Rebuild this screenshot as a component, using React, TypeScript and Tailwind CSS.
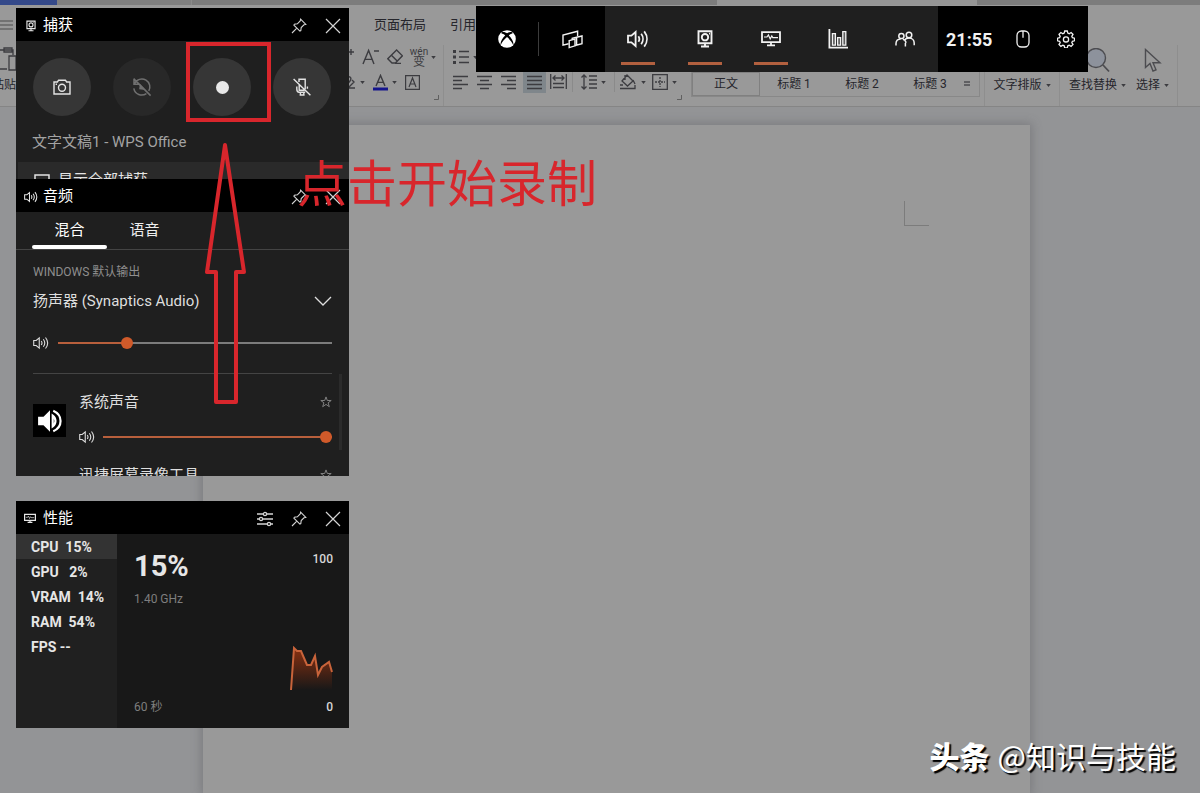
import React from "react";

type Kids = { children?: React.ReactNode };

/* ---------- icons ---------- */

type SvgProps = Kids & { className?: string; box?: string; sw?: number };

function Svg({ children, className = "size-5", box = "0 0 20 20", sw = 1.4 }: SvgProps) {
  return (
    <svg
      viewBox={box}
      className={`shrink-0 ${className}`}
      fill="none"
      stroke="currentColor"
      strokeWidth={sw}
      aria-hidden="true"
    >
      {children}
    </svg>
  );
}

const PinIcon = () => (
  <Svg className="size-4" box="0 0 16 16" sw={1.1}>
    <path d="M9.6 1.2 14.8 6.4 13 6.8 10.2 9.6 9.8 12.6 8.9 13.1 2.9 7.1 3.4 6.2 6.4 5.8 9.2 3z M5.8 10.2 1 15" />
  </Svg>
);

const CloseIcon = () => (
  <Svg className="size-4" box="0 0 16 16" sw={1.2}>
    <path d="M1 1 15 15M15 1 1 15" />
  </Svg>
);

const SlidersIcon = () => (
  <Svg className="size-4" box="0 0 16 16" sw={1.3}>
    <path d="M0 3h6.4M9.6 3H16M0 8h2.4M5.6 8H16M0 13h10.4M13.6 13H16" />
    <circle cx="8" cy="3" r="1.6" />
    <circle cx="4" cy="8" r="1.6" />
    <circle cx="12" cy="13" r="1.6" />
  </Svg>
);

const SpeakerIcon = ({ className = "h-4 w-4", sw = 1.3 }: { className?: string; sw?: number }) => (
  <Svg className={className} box="0 0 22 18" sw={sw}>
    <path d="M1 5.6h3.4L8.6 2v14L4.4 12.4H1z" />
    <path d="M11.4 6.2c1.1 1.6 1.1 4 0 5.6M14.2 3.8c2.3 3 2.3 7.4 0 10.4M17.2 1.4c3.6 4.6 3.6 10.6 0 15.2" />
  </Svg>
);

const CaptureIcon = ({ className = "h-[18px] w-4", sw = 1.9 }: { className?: string; sw?: number }) => (
  <Svg className={className} box="0 0 16 18" sw={sw}>
    <path d="M1.5 1.2h13v12h-13zM8 13v3M4 16.5h8" />
    <circle cx="8" cy="7.2" r="3.2" />
    <path d="M12 3.6h1" />
  </Svg>
);

const MonitorIcon = ({ className = "h-4 w-5", sw = 1.8 }: { className?: string; sw?: number }) => (
  <Svg className={className} box="0 0 20 16" sw={sw}>
    <path d="M1 1.2h18v10H1zM10 11v3M6 14.4h8" />
    <path d="M3 6h3l1.4-2 1.8 4 1.6-3 1 1.6H17" strokeWidth="1.2" />
  </Svg>
);

const XboxIcon = () => (
  <svg viewBox="0 0 20 20" className="size-[18px]" aria-hidden="true">
    <circle cx="10" cy="10" r="9.8" fill="#fff" />
    <path
      d="M4.2 2.6C6 1.6 8.400 2.500 10 3.600 11.600 2.500 14 1.600 15.800 2.600 17 3.600 15.600 4 14.800 4.200 13.600 4.600 12.600 5.400 12 6 15 8.800 18 13.400 17 17 16 14 12.600 10 10 7.900 7.400 10 4 14 3 17 2 13.400 5 8.800 8 6 7.400 5.400 6.400 4.600 5.200 4.200 4.400 4 3 3.600 4.200 2.600z"
      fill="#000"
    />
  </svg>
);

const WidgetsIcon = () => (
  <Svg className="h-[19px] w-[21px]" box="0 0 21 19" sw={1.4}>
    <path d="M15.600 6.200V1.200L1 5v10.200l5.600-1.400" />
    <path d="M7.200 10.600 13 9v6.800L7.200 17.600z" />
    <path d="M10.200 9.700V8.400L20 6v7.600l-7 1.900M14.600 7.300v7.600" />
  </Svg>
);

const BarsIcon = () => (
  <Svg className="size-5" sw={1.3}>
    <path d="M1.4 0v18.6H20" strokeWidth="1.8" />
    <path d="M4.4 4.6h3v11.6h-3zM9.6 8.6h3v7.6h-3zM14.8 2.6h3v13.6h-3z" fill="currentColor" fillOpacity=".3" />
  </Svg>
);

const PeopleIcon = () => (
  <Svg className="h-4 w-5" box="0 0 20 16" sw={1.5}>
    <circle cx="6.400" cy="5" r="2.600" />
    <circle cx="14" cy="4" r="2.800" />
    <path d="M1 14.400v-1.800c0-2.600 1.800-4.400 4.600-4.600M8 8.400c2 .6 2.800 1.800 3 3.400M10.400 15.600V12M9.600 9c1-1.400 2.400-2 4.400-2 3.200 0 5.200 2.200 5.200 5v2.200" />
  </Svg>
);

const MouseIcon = () => (
  <Svg className="h-[18px] w-[14px]" box="0 0 14 18" sw={1.3}>
    <rect x="1" y="1" width="12" height="16" rx="4.500" />
    <path d="M7 1v6.800" />
  </Svg>
);

const GearIcon = () => (
  <Svg className="size-[18px]" box="0 0 18 18" sw={1.3}>
    <path d="M7.700 1h2.600l.5 2.100 1.400.6 1.900-1.200 1.900 1.900-1.200 1.900.6 1.400 2.100.5v2.600l-2.100.5-.6 1.300 1.200 1.900-1.900 1.900-1.900-1.200-1.400.6-.5 2.100H7.700l-.5-2.100-1.400-.6-1.900 1.200L2 14.500l1.200-1.900-.6-1.300L.5 10.800V8.200l2.100-.5.6-1.400L2 4.400l1.900-1.900 1.900 1.200 1.400-.6z" />
    <circle cx="9" cy="9.400" r="2.600" />
  </Svg>
);

const CameraIcon = () => (
  <Svg className="h-4 w-[18px]" box="0 0 18 16" sw={1.4}>
    <path d="M1 3h3.400l1.200-1.800h6.800L13.600 3H17v12H1z" />
    <circle cx="9" cy="8.800" r="3.500" />
    <path d="M2.600 5.200h1.400" />
  </Svg>
);

const LastClipIcon = () => (
  <Svg className="size-5" sw={1.5}>
    <path d="M2 2.200v5h5M2.400 7C4.400 2.200 10 .8 14 3.200c4 2.400 4.800 7 2.800 10.800M14.400 16.600C9.600 19.800 3 17.600 1.800 11.400M1.600 1.600l17 17" />
    <path d="M8.400 8.400 8 11.600l3.600.4z" fill="currentColor" />
  </Svg>
);

const MicOffIcon = () => (
  <Svg className="size-5" sw={1.400}>
    <path d="M7 5V2.200h6.200v10M7.200 8v5.200h5.200M4.800 9.600v2.400c0 2 .8 3.200 2.400 3.200h6M15.400 9.600v2.200M8.400 15.200v2.800h3.400v-2.800M7.600 18h5M1.600 2l16.800 16.200" />
  </Svg>
);

const StarIcon = () => (
  <Svg className="size-3 text-[#808080]" box="0 0 12 12" sw={1}>
    <path d="M6 .9 7.300 4.500h3.900L8.100 6.800l1.200 3.900L6 8.400l-3.300 2.300 1.200-3.900L.8 4.500h3.900z" />
  </Svg>
);

const Caret = () => (
  <svg viewBox="0 0 6 4" className="h-[3px] w-[5px] shrink-0" aria-hidden="true">
    <path d="M0 0h6L3 4z" fill="#3c3c40" />
  </svg>
);

/* ---------- word processor behind the overlay ---------- */

const alignLines = {
  left: "M0 1.500h15M0 5.500h9M0 9.500h15M0 13.500h9",
  center: "M0 1.500h15M3 5.500h9M0 9.500h15M3 13.500h9",
  right: "M0 1.500h15M6 5.500h9M0 9.500h15M6 13.500h9",
  full: "M0 1.500h15M0 5.500h15M0 9.500h15M0 13.500h15",
};

function AlignIcon({ kind }: { kind: keyof typeof alignLines }) {
  return (
    <Svg className="size-[15px]" box="0 0 15 15" sw={1.3}>
      <path d={alignLines[kind]} />
    </Svg>
  );
}

function Tool({ label, children, className = "" }: Kids & { label: string; className?: string }) {
  return (
    <button type="button" aria-label={label} className={`flex shrink-0 items-center gap-1 ${className}`}>
      {children}
    </button>
  );
}

const CornerMark = () => (
  <Svg className="size-[5px] text-[#606060]" box="0 0 5 5" sw={1}>
    <path d="M4.500 0v4.500H0" />
  </Svg>
);

const Divider = () => <span className="h-5 w-px shrink-0 bg-[#8a8a8a]" />;

function Ribbon() {
  return (
    <header className="h-[102px] shrink-0 overflow-hidden border-b border-[#858585] bg-[#999999] text-[13px] text-[#26262c]">
      <nav className="flex h-10 items-center">
        <button type="button" aria-label="文件" className="w-[374px] shrink-0">
          <Svg className="h-[10px] w-[13px] text-[#4c4c4c]" box="0 0 13 10" sw={1.1}>
            <path d="M0 1h13M0 5h13M0 9h13" />
          </Svg>
        </button>
        <a href="#layout" className="mr-6 shrink-0">页面布局</a>
        <a href="#references" className="shrink-0">引用</a>
      </nav>

      <div className="flex h-[62px] text-[#3c3c40]">
        <div className="flex w-[340px] shrink-0 flex-col items-start">
          <Svg className="mt-[2px] h-6 w-4" box="0 0 16 24" sw={1.3}>
            <path d="M0 3h13v5M4 1h8v4H4zM0 22h7M9 9h7v14H9z" />
          </Svg>
          <span className="mt-[5px] flex w-4 justify-end whitespace-nowrap text-[12px] text-[#26262c]">粘贴</span>
        </div>

        <div className="flex w-[104px] shrink-0 flex-col border-r border-[#8e8e8e]">
          <div className="flex h-6 items-center gap-2">
            <Tool label="增大字号"><Svg className="h-5 w-[14px]" box="0 0 14 20"><path d="M0 6l5 10M11 2v6M8 5h6" /></Svg></Tool>
            <Tool label="减小字号"><Svg className="h-5 w-[17px]" box="0 0 17 20"><path d="M1 17 6.600 3.400 12 17M3 12.400h7.200M12 4h5" /></Svg></Tool>
            <Tool label="清除格式"><Svg className="size-4" box="0 0 16 16"><path d="M9.600 1 15.400 6.800 8.400 14H5L.8 9.800zM4.400 6.200l5.800 5.800M8 14.400h6" /></Svg></Tool>
            <Tool label="拼音指南">
              <span className="flex w-4 flex-col items-center">
                <span className="text-[10px] leading-[9px]">wén</span>
                <span className="text-[12px] leading-[12px]">变</span>
              </span>
              <Caret />
            </Tool>
          </div>
          <div className="flex h-[26px] items-center gap-2">
            <Tool label="突出显示">
              <Svg className="h-4 w-4" box="0 0 16 16"><path d="M4 4c4-3 9-1 6 3l-5 6M6 14h9M12 6l2 2-5 5" /></Svg>
              <Caret />
            </Tool>
            <Tool label="字体颜色">
              <Svg className="h-[17px] w-[15px]" box="0 0 15 17">
                <path d="M3 12 7.500 1.400 12 12M4.400 8.400h6.200" />
                <path d="M0 15h15" stroke="#14148c" strokeWidth="3" />
              </Svg>
              <Caret />
            </Tool>
            <Tool label="字符边框">
              <Svg className="size-[15px]" box="0 0 15 15" sw={1.2}><path d="M.6.6h13.800v13.800H.6zM4 12l3.500-9L11 12M5.200 9h4.600" /></Svg>
            </Tool>
          </div>
          <div className="mr-1 flex justify-end"><CornerMark /></div>
        </div>

        <div className="flex w-[247px] shrink-0 flex-col pl-[9px]">
          <div className="flex h-6 items-center">
            <Tool label="项目符号">
              <Svg className="size-4" box="0 0 16 16"><path d="M6 2.500h10M6 8h10M6 13.500h10" /><path d="M0 2.500h3M0 8h3M0 13.500h3" strokeWidth="3" /></Svg>
              <Caret />
            </Tool>
          </div>
          <div className="flex h-[26px] items-center">
            <Tool label="左对齐" className="w-6"><AlignIcon kind="left" /></Tool>
            <Tool label="居中" className="w-6"><AlignIcon kind="center" /></Tool>
            <Tool label="右对齐" className="w-[22px]"><AlignIcon kind="right" /></Tool>
            <Tool label="两端对齐" className="h-[22px] w-[23px] justify-center bg-[#7f868b]"><AlignIcon kind="full" /></Tool>
            <Tool label="分散对齐" className="ml-1 w-[22px]">
              <Svg className="h-4 w-[17px]" box="0 0 17 16" sw={1.3}><path d="M.7 0v15M16.300 0v15M3 4h11M5.500 1.500 3 4l2.500 2.500M11.500 1.500 14 4l-2.500 2.500M3 9.500h11M3 13.500h11" /></Svg>
            </Tool>
            <Divider />
            <Tool label="行距" className="mx-2">
              <Svg className="h-4 w-4" box="0 0 16 16" sw={1.3}><path d="M3 1v14M.5 3.500 3 1l2.500 2.500M.5 12.500 3 15l2.500-2.500M8 2h8M8 6h8M8 10h8M8 14h8" /></Svg>
              <Caret />
            </Tool>
            <Divider />
            <Tool label="底纹" className="ml-1">
              <Svg className="h-4 w-[18px]" box="0 0 18 16" sw={1.3}><path d="M8 1 14 7 8.500 12 3 7zM6 1v5M14 6l2 4M1 11h3M1 14.500h15V11" /></Svg>
              <Caret />
            </Tool>
            <Tool label="边框" className="ml-[6px]">
              <Svg className="size-4" box="0 0 16 16" sw={1.3}><path d="M.7.7h14.600v14.600H.7z" /><path d="M8 3v10M3 8h10" strokeDasharray="2 1" /></Svg>
              <Caret />
            </Tool>
          </div>
          <div className="mr-[9px] flex justify-end"><CornerMark /></div>
        </div>

        <div className="mb-[10px] mt-[3px] flex w-[289px] shrink-0 items-end border border-[#888888] text-[12px] text-[#26262c]">
          <button type="button" className="h-6 w-[68px] shrink-0 border border-[#808080]">正文</button>
          <button type="button" className="h-6 w-[68px] shrink-0">标题 1</button>
          <button type="button" className="h-6 w-[68px] shrink-0">标题 2</button>
          <button type="button" className="h-6 w-[68px] shrink-0">标题 3</button>
          <button type="button" aria-label="更多样式" className="flex h-6 items-center">
            <Svg className="h-2 w-[6px]" box="0 0 6 8" sw={1}><path d="M0 2h6M0 5h6" /></Svg>
          </button>
        </div>

        <div className="ml-1 flex w-[76px] shrink-0 items-start justify-center border-x border-[#8e8e8e] pt-[31px] text-[12px] text-[#26262c]">
          <button type="button" className="flex items-center gap-1 whitespace-nowrap">文字排版<Caret /></button>
        </div>
        <div className="flex shrink-0 gap-[10px] border-r border-[#8e8e8e] pl-[9px] pr-2 text-[12px] text-[#26262c]">
          <button type="button" className="flex flex-col items-center pt-[3px]">
            <Svg className="mb-[3px] h-[25px] w-[26px] text-[#4c4c50]" box="0 0 26 25" sw={1.4}><circle cx="11" cy="10" r="9.500" fill="#8d929c" /><path d="m18 17 6 6.500" strokeWidth="1.800" /></Svg>
            <span className="flex items-center gap-1 whitespace-nowrap">查找替换<Caret /></span>
          </button>
          <button type="button" className="flex flex-col items-center pt-[3px]">
            <Svg className="mb-[3px] h-[25px] w-[18px] text-[#4c4c50]" box="0 0 18 25" sw={1.400}><path d="M1.500 1.500v18l4.500-4 3 7.500 3-1.200-3-7h7z" /></Svg>
            <span className="flex items-center gap-1 whitespace-nowrap">选择<Caret /></span>
          </button>
        </div>
      </div>
    </header>
  );
}

function WordProcessor() {
  return (
    <div className="flex min-h-screen flex-col bg-[#939496]">
      <div className="flex h-[5px] shrink-0 bg-[#7c7c7c]">
        <span className="w-[57px] bg-[#34498a]" />
        <span className="w-[134px] bg-[#808080]" />
        <span className="w-[526px] border-l border-[#8a8a8a]" />
        <span className="w-[260px] bg-[#959595]" />
      </div>
      <Ribbon />
      <main className="mt-[18px] flex grow pl-[203px] pr-[170px]">
        <div className="grow bg-[#999999] shadow-[0_0_9px_2px_rgba(90,90,96,0.4)]">
          <div className="ml-auto mr-[101px] mt-[76px] h-[25px] w-[25px] border-b border-l border-[#7c7c7c]" />
        </div>
      </main>
    </div>
  );
}

/* ---------- game bar ---------- */

function BarTab({ label, active, children }: Kids & { label: string; active?: boolean }) {
  return (
    <button type="button" aria-label={label} className="relative flex flex-1 items-center justify-center">
      {children}
      {active && <span className="absolute bottom-[7px] h-[3px] w-[34px] bg-[#b2603f]" />}
    </button>
  );
}

function GameBar() {
  return (
    <nav className="absolute left-[476px] top-[6px] flex h-[66px] w-[612px] text-[#f2f2f2]">
      <div className="flex w-[129px] items-center bg-black">
        <button type="button" aria-label="Xbox" className="flex w-[62px] justify-center"><XboxIcon /></button>
        <span className="h-[34px] w-px bg-[#3c3c3c]" />
        <button type="button" aria-label="小组件" className="flex flex-1 justify-center"><WidgetsIcon /></button>
      </div>
      <div className="flex w-[333px] bg-[#1f1f1f]">
        <BarTab label="音频" active><SpeakerIcon className="h-[18px] w-[22px]" sw={1.8} /></BarTab>
        <BarTab label="捕获" active><CaptureIcon /></BarTab>
        <BarTab label="性能" active><MonitorIcon /></BarTab>
        <BarTab label="资源"><BarsIcon /></BarTab>
        <BarTab label="好友"><PeopleIcon /></BarTab>
      </div>
      <div className="flex flex-1 items-center bg-black pl-2">
        <time className="w-[55px] text-[18px] font-bold">21:55</time>
        <button type="button" aria-label="鼠标" className="flex w-11 justify-center"><MouseIcon /></button>
        <button type="button" aria-label="设置" className="flex w-[42px] justify-center"><GearIcon /></button>
      </div>
    </nav>
  );
}

/* ---------- widgets ---------- */

function WidgetHeader({ title, icon, options }: { title: string; icon: React.ReactNode; options?: boolean }) {
  return (
    <header className="flex h-[33px] items-center bg-black pl-2 pr-2 pt-[2px] text-[#e8e8e8]">
      <span className="flex w-[19px] items-center">{icon}</span>
      <h2 className="grow text-[15px] text-white">{title}</h2>
      <div className="flex items-center gap-[18px] text-[#d4d4d4]">
        {options && <button type="button" aria-label="选项"><SlidersIcon /></button>}
        <button type="button" aria-label="固定"><PinIcon /></button>
        <button type="button" aria-label="关闭"><CloseIcon /></button>
      </div>
    </header>
  );
}

function RoundButton({ label, dim, children }: Kids & { label: string; dim?: boolean }) {
  return (
    <button
      type="button"
      aria-label={label}
      className={`flex size-[58px] items-center justify-center rounded-full ${dim ? "bg-[#282828] text-[#707070]" : "bg-[#363636] text-[#e4e4e4]"}`}
    >
      {children}
    </button>
  );
}

function CaptureWidget() {
  return (
    <section>
      <WidgetHeader title="捕获" icon={<CaptureIcon className="ml-[2px] h-3 w-[10px]" sw={1.8} />} />
      <div className="h-[138px] overflow-hidden bg-[#1f1f1f] pt-[17px]">
        <div className="flex gap-[22px] pl-[17px]">
          <RoundButton label="截图"><CameraIcon /></RoundButton>
          <RoundButton label="录制最近片段" dim><LastClipIcon /></RoundButton>
          <RoundButton label="开始录制"><span className="size-[13px] rounded-full bg-[#e8e8e8]" /></RoundButton>
          <RoundButton label="麦克风已关闭"><MicOffIcon /></RoundButton>
        </div>
        <p className="mt-4 pl-4 text-[15px] leading-5 text-[#a3a3a3]">文字文稿1 - WPS Office</p>
        <button type="button" className="ml-[2px] mt-[10px] flex h-9 w-[331px] items-center gap-2 bg-[#2a2a2a] pl-4 text-[15px] text-[#e4e4e4]">
          <Svg className="size-4" box="0 0 16 16" sw={1.5}><path d="M1 3h14v10H1z" /></Svg>
          显示全部捕获
        </button>
      </div>
    </section>
  );
}

const sliderBase =
  "h-3 min-w-0 grow appearance-none bg-transparent [&::-webkit-slider-runnable-track]:h-[2px] [&::-webkit-slider-thumb]:-mt-[5px] [&::-webkit-slider-thumb]:size-3 [&::-webkit-slider-thumb]:appearance-none [&::-webkit-slider-thumb]:rounded-full [&::-webkit-slider-thumb]:bg-[#d05a2a]";

function AudioWidget() {
  return (
    <section>
      <WidgetHeader title="音频" icon={<SpeakerIcon className="h-3 w-[14px]" sw={1.6} />} />
      <div className="relative h-[264px] overflow-hidden bg-[#1f1f1f] text-[15px] text-[#dedede]">
        <div role="tablist" className="flex h-[38px] border-b border-[#444444] pl-4">
          <button type="button" role="tab" aria-selected="true" className="relative w-[75px] text-white">
            混合
            <span className="absolute bottom-0 left-0 h-1 w-full rounded-sm bg-white" />
          </button>
          <button type="button" role="tab" aria-selected="false" className="w-[75px] text-[#eeeeee]">语音</button>
        </div>
        <div className="px-[17px]">
          <h3 className="mt-3 text-[12px] leading-5 text-[#8e8e8e]">WINDOWS 默认输出</h3>
          <button type="button" className="mt-[7px] flex h-6 w-full items-center justify-between">
            <span>扬声器 (Synaptics Audio)</span>
            <Svg className="h-[10px] w-[18px]" box="0 0 18 10" sw={1.3}><path d="m1 1 8 8 8-8" /></Svg>
          </button>
          <label className="mt-5 flex h-5 items-center gap-[9px]">
            <SpeakerIcon className="h-[14px] w-4" sw={1.5} />
            <input
              type="range"
              aria-label="主音量"
              defaultValue={24}
              className={`${sliderBase} [&::-webkit-slider-runnable-track]:bg-[linear-gradient(to_right,#b85f3c_25%,#7c7c7c_25%)]`}
            />
          </label>
          <div className="mt-5 flex gap-[13px] border-t border-[#444444] pt-[30px]">
            <span className="flex size-[33px] shrink-0 items-center justify-center bg-black">
              <svg viewBox="0 0 24 24" className="size-[26px]" aria-hidden="true">
                <path d="M1 8h5l6-6v20l-6-6H1z" fill="#fff" />
                <path d="M14.500 7c3.400 2.500 3.400 7.500 0 10zM15 2.500c9 4 9 15 0 19" fill="none" stroke="#fff" strokeWidth="2" />
              </svg>
            </span>
            <div className="-mt-3 min-w-0 grow">
              <div className="flex h-5 items-center justify-between">
                <span>系统声音</span>
                <StarIcon />
              </div>
              <label className="mt-[15px] flex h-5 items-center gap-2">
                <SpeakerIcon className="h-[14px] w-4" sw={1.5} />
                <input
                  type="range"
                  aria-label="系统声音音量"
                  defaultValue={100}
                  className={`${sliderBase} [&::-webkit-slider-runnable-track]:bg-[#b85f3c]`}
                />
              </label>
              <div className="mt-[18px] flex h-5 items-center justify-between whitespace-nowrap">
                <span>迅捷屏幕录像工具</span>
                <StarIcon />
              </div>
            </div>
          </div>
        </div>
        <span className="absolute right-[7px] top-[162px] h-[76px] w-[3px] bg-[#2b2b2b]" />
      </div>
    </section>
  );
}

const metrics = [
  { name: "CPU", value: " 15%" },
  { name: "GPU", value: "  2%" },
  { name: "VRAM", value: " 14%" },
  { name: "RAM", value: " 54%" },
  { name: "FPS", value: "--" },
];

function PerformanceWidget() {
  return (
    <section>
      <WidgetHeader title="性能" icon={<MonitorIcon className="h-[11px] w-3" sw={2} />} options />
      <div className="flex h-[194px] bg-[#181818]">
        <ul className="w-[101px] shrink-0 bg-[#202020] text-[14px] font-bold text-[#e6e6e6]">
          {metrics.map((m, i) => (
            <li key={m.name}>
              <button
                type="button"
                className={`flex h-[25px] w-full items-center whitespace-pre pl-[15px] pt-[2px] ${i === 0 ? "bg-[#333333]" : ""}`}
              >
                {`${m.name} ${m.value}`}
              </button>
            </li>
          ))}
        </ul>
        <div className="flex grow flex-col justify-between pb-[11px] pl-[17px] pr-4 pt-[14px] text-[12px] text-[#7e7e7e]">
          <div className="flex items-start justify-between">
            <div>
              <p className="text-[29px] font-bold leading-9 text-[#e6e6e6]">15%</p>
              <p className="mt-[7px] leading-4">1.40 GHz</p>
            </div>
            <span className="mt-[3px] text-[12px] font-medium leading-4 text-[#d6d6d6]">100</span>
          </div>
          <div className="flex flex-col items-end">
            <svg viewBox="0 0 43 46" className="h-[46px] w-[43px]" aria-hidden="true">
              <defs>
                <linearGradient id="load" x1="0" y1="0" x2="0" y2="1">
                  <stop offset="0" stopColor="#8a3010" />
                  <stop offset="1" stopColor="#8a3010" stopOpacity="0" />
                </linearGradient>
              </defs>
              <path d="M1 44 4 2 7 5 11 5 14 12 17 19 21 19 25 10 28 29 32 21 39 16 42 26V44z" fill="url(#load)" />
              <path d="M1 44 4 2 7 5 11 5 14 12 17 19 21 19 25 10 28 29 32 21 39 16 42 26" fill="none" stroke="#c8633a" strokeWidth="2" />
            </svg>
            <div className="mt-[5px] flex w-full items-center justify-between leading-5">
              <span>60 秒</span>
              <span className="font-medium text-[#d6d6d6]">0</span>
            </div>
          </div>
        </div>
      </div>
    </section>
  );
}

/* ---------- annotations ---------- */

function Annotations() {
  return (
    <>
      <div className="pointer-events-none absolute left-[186px] top-[42px] h-20 w-[85px] border-4 border-[#d8262c]" />
      <svg viewBox="0 0 44 264" className="pointer-events-none absolute left-[203px] top-[142px] h-[264px] w-[44px]" aria-hidden="true">
        <path d="M22 3 4 130h9v130h20V130h8z" fill="none" stroke="#d8262c" strokeWidth="4" strokeLinejoin="round" />
      </svg>
      <p className="pointer-events-none absolute left-[297px] top-[155px] whitespace-nowrap text-[50px] leading-[60px] text-[#d8262c]">
        点击开始录制
      </p>
      <p className="pointer-events-none absolute bottom-[16px] right-[24px] flex items-center gap-2 whitespace-nowrap font-['Noto_Sans_CJK_SC',sans-serif] text-[30px] leading-[44px] text-white [text-shadow:2px_2px_1px_#000]">
        <strong className="font-black">头条</strong>
        <span>@知识与技能</span>
      </p>
    </>
  );
}

export default function App() {
  return (
    <div className="relative min-h-screen overflow-hidden font-['Roboto','Noto_Sans_CJK_SC',sans-serif]">
      <WordProcessor />
      <GameBar />
      <div className="absolute left-4 top-2 w-[333px]">
        <CaptureWidget />
        <AudioWidget />
        <div className="mt-[25px]">
          <PerformanceWidget />
        </div>
      </div>
      <Annotations />
    </div>
  );
}
